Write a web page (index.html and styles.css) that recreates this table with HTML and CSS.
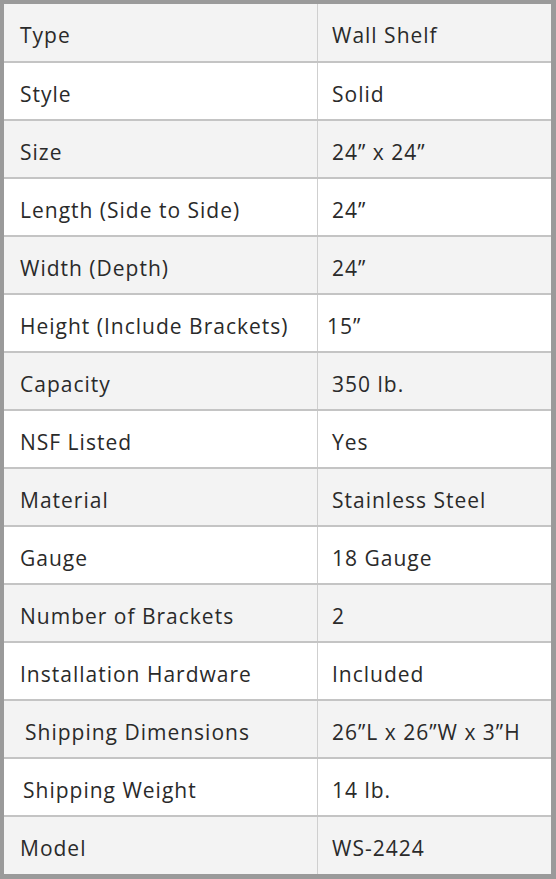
FILE: index.html
```html
<!DOCTYPE html>
<html>
<head>
<meta charset="utf-8">
<link rel="stylesheet" href="styles.css">
</head>
<body>
<div class="frame">
  <table class="specs">
    <tr class="alt"><td>Type</td><td>Wall Shelf</td></tr>
    <tr><td>Style</td><td>Solid</td></tr>
    <tr class="alt"><td>Size</td><td>24” x 24”</td></tr>
    <tr><td>Length (Side to Side)</td><td>24”</td></tr>
    <tr class="alt"><td>Width (Depth)</td><td>24”</td></tr>
    <tr><td>Height (Include Brackets)</td><td class="shift-l">15”</td></tr>
    <tr class="alt"><td>Capacity</td><td>350 lb.</td></tr>
    <tr><td>NSF Listed</td><td>Yes</td></tr>
    <tr class="alt"><td>Material</td><td>Stainless Steel</td></tr>
    <tr><td>Gauge</td><td>18 Gauge</td></tr>
    <tr class="alt"><td>Number of Brackets</td><td>2</td></tr>
    <tr><td>Installation Hardware</td><td>Included</td></tr>
    <tr class="alt"><td class="shift-r">Shipping Dimensions</td><td>26”L x 26”W x 3”H</td></tr>
    <tr><td class="shift-r2">Shipping Weight</td><td>14 lb.</td></tr>
    <tr class="alt"><td>Model</td><td>WS-2424</td></tr>
  </table>
</div>
</body>
</html>
```

FILE: styles.css
```css
html, body {
  margin: 0;
  padding: 0;
  background: #ffffff;
}
.frame {
  width: 556px;
  height: 879px;
  box-sizing: border-box;
  border-top: 4px solid #9a9a9a;
  border-left: 4px solid #9a9a9a;
  border-right: 5px solid #9a9a9a;
  border-bottom: 5px solid #9a9a9a;
  background: #fff;
}
.specs {
  width: 100%;
  height: 100%;
  border-collapse: collapse;
  table-layout: fixed;
  font-family: "Open Sans", "Noto Sans", sans-serif;
  font-size: 21px;
  color: #2a2a2a;
  letter-spacing: 1px;
}
.specs tr {
  height: 58px;
}
.specs tr + tr td {
  border-top: 2px solid #c4c4c4;
}
.specs tr.alt {
  background: #f3f3f3;
}
.specs td {
  padding: 5px 0 0 16px;
  vertical-align: middle;
}
.specs td:first-child {
  width: 297px;
  border-right: 1px solid #cfcfcf;
}
.specs td + td {
  padding-left: 14px;
}
.specs td.shift-l {
  padding-left: 9px;
}
.specs td.shift-r {
  padding-left: 21px;
}
.specs td.shift-r2 {
  padding-left: 19px;
}
```
